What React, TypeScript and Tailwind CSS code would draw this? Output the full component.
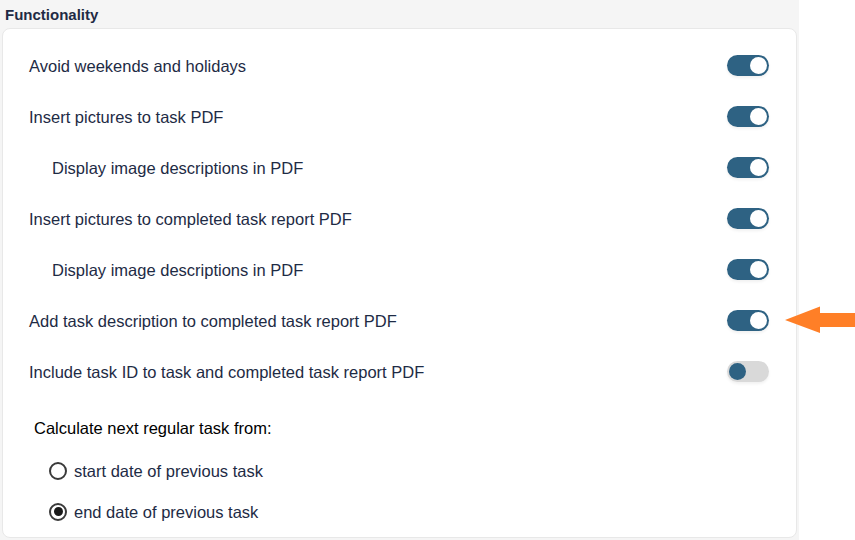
import React from "react";

function Toggle({ on }: { on: boolean }) {
  return on ? (
    <div className="w-[42px] h-[21px] rounded-full bg-[#2e6283] flex items-center justify-end pr-[2px] shadow-[0_2px_3px_rgba(0,0,0,0.06)]">
      <div className="w-[17px] h-[17px] rounded-full bg-white" />
    </div>
  ) : (
    <div className="w-[42px] h-[21px] rounded-full bg-[#d9d9d9] flex items-center justify-start pl-[2px] shadow-[0_2px_3px_rgba(0,0,0,0.06)]">
      <div className="w-[17px] h-[17px] rounded-full bg-[#2e6283]" />
    </div>
  );
}

function Row({ label, on, indent }: { label: string; on: boolean; indent?: boolean }) {
  return (
    <div className="h-[51px] flex items-center justify-between pr-[27px]">
      <span className={indent ? "pl-[49px]" : "pl-[26px]"}>{label}</span>
      <Toggle on={on} />
    </div>
  );
}

function Radio({ label, checked }: { label: string; checked: boolean }) {
  return (
    <div className="h-[41px] flex items-center pl-[46px] gap-[7px]">
      <div className="w-[18px] h-[18px] rounded-full border-2 border-[#3a3a3a] flex items-center justify-center bg-white">
        {checked && <div className="w-[9px] h-[9px] rounded-full bg-[#1a1a1a]" />}
      </div>
      <span className="text-[#1e2b45]">{label}</span>
    </div>
  );
}

export default function App() {
  return (
    <div className="w-[855px] h-[540px] bg-white relative overflow-hidden font-['Liberation_Sans',Arial,sans-serif]">
      <div className="w-[799px] h-full bg-[#f5f5f5] flex flex-col px-[2px] pb-[2px]">
        <div className="h-[28px] shrink-0 flex items-center pl-[3px] pt-[2px] text-[15px] font-bold text-[#1f2a44]">
          Functionality
        </div>
        <div className="flex-1 min-h-0 bg-white rounded-[8px] border border-[#e8e8e8] pt-[11px] text-[16.5px] leading-[24px] text-[#1e2b45]">
          <Row label="Avoid weekends and holidays" on />
          <Row label="Insert pictures to task PDF" on />
          <Row label="Display image descriptions in PDF" on indent />
          <Row label="Insert pictures to completed task report PDF" on />
          <Row label="Display image descriptions in PDF" on indent />
          <Row label="Add task description to completed task report PDF" on />
          <Row label="Include task ID to task and completed task report PDF" on={false} />
          <div className="h-[53px] pt-[19px] pl-[31px] text-black">
            Calculate next regular task from:
          </div>
          <Radio label="start date of previous task" checked={false} />
          <Radio label="end date of previous task" checked />
        </div>
      </div>
      <svg
        className="absolute left-[785px] top-[306px]"
        width="70"
        height="28"
        viewBox="0 0 70 28"
      >
        <polygon points="0,14 35,0.5 35,7 70,7 70,21 35,21 35,27 " fill="#ff7f27" />
      </svg>
    </div>
  );
}
